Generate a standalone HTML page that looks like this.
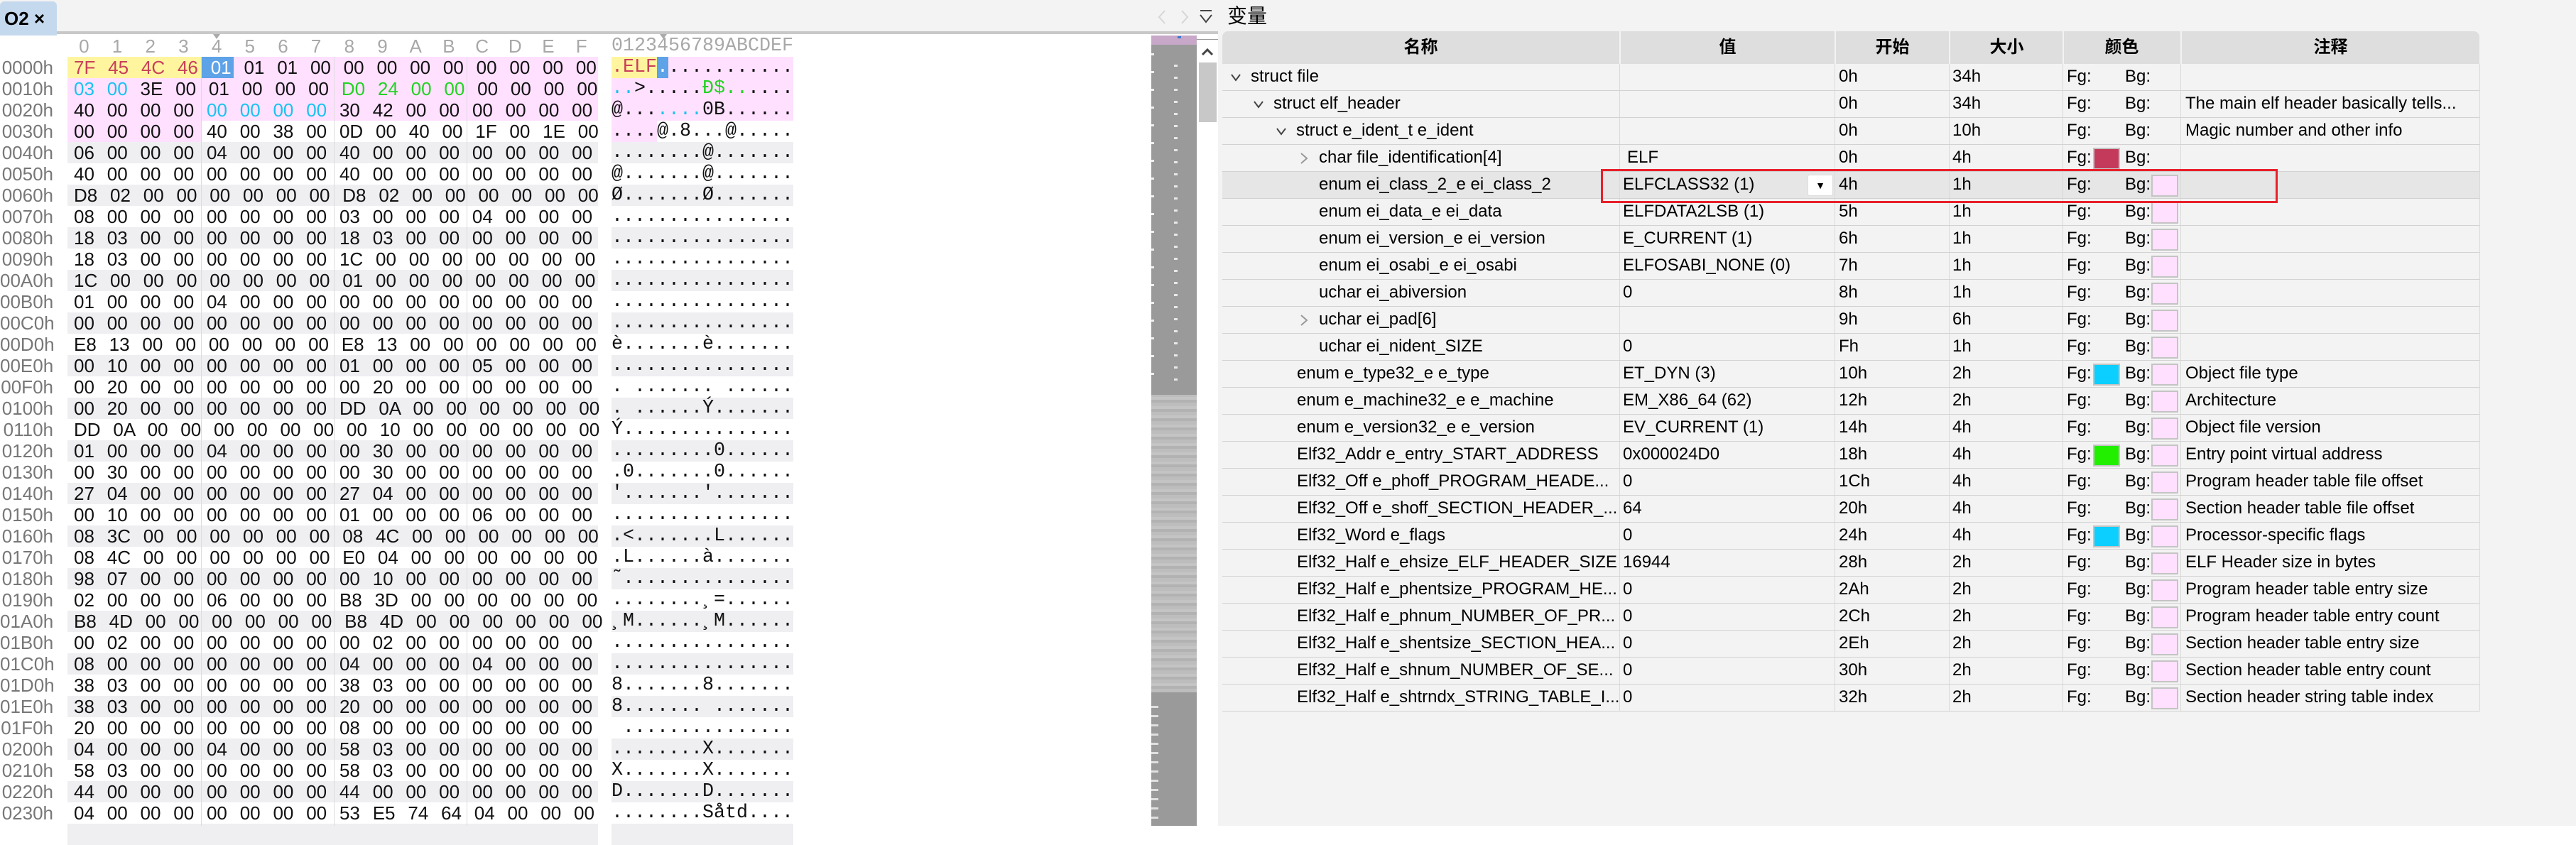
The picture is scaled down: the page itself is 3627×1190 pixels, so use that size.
<!DOCTYPE html>
<html><head><meta charset="utf-8"><style>
*{margin:0;padding:0;box-sizing:border-box}
body{width:3627px;height:1163px;overflow:hidden;background:#fff;position:relative;font-family:"Liberation Sans","Noto Sans CJK SC",sans-serif;color:#000}
.a{position:absolute}
.hr{position:absolute;left:95px;width:780px;height:30px;line-height:30px;font-size:26px;padding-left:9px;word-spacing:10.6px;white-space:pre;color:#111}
.hh{position:absolute;left:95px;top:50px;height:30px;line-height:30px;font-size:26px;color:#a8a8a8;display:flex}
.hh span{width:46.7px;text-align:center}
.off{position:absolute;left:0;width:75px;text-align:right;height:30px;line-height:30px;font-size:26px;color:#777}
.as{position:absolute;left:861px;height:30px;line-height:30px;font-family:"Liberation Mono",monospace;font-size:26.67px;white-space:pre;color:#111}
.g{position:absolute;background:#efeff2;height:30px}
.tr{position:absolute;left:1721px;width:1770px;height:38px;border-bottom:1px solid #d2d2d2;font-size:24px;line-height:36px;white-space:nowrap}
.tr span{position:absolute;top:0}
.fg{left:1189px}.bg{left:1271px}
.sw{position:absolute;top:4px;width:38px;height:31px;border:2px solid #c4c4c4}
</style></head><body>
<div class="a" style="left:0;top:0;width:1715px;height:47px;background:#f3f3f3"></div>
<div class="a" style="left:80px;top:44px;width:1635px;height:4px;background:#c8c8c8"></div>
<div class="a" style="left:0;top:2px;width:80px;height:48px;background:#c5d9ee;border-radius:6px 6px 0 0;font-size:26px;line-height:48px;padding-left:6px;font-weight:bold">O2 ×</div>
<div class="hh"><span>0</span><span>1</span><span>2</span><span>3</span><span>4</span><span>5</span><span>6</span><span>7</span><span>8</span><span>9</span><span>A</span><span>B</span><span>C</span><span>D</span><span>E</span><span>F</span></div>
<div class="as" style="top:50px;color:#a8a8a8">0123456789ABCDEF</div>
<div class="a" style="left:300px;top:48px;width:0;height:0;border-left:5px solid transparent;border-right:5px solid transparent;border-top:7px solid #aaa"></div>
<div class="a" style="left:929px;top:48px;width:0;height:0;border-left:5px solid transparent;border-right:5px solid transparent;border-top:7px solid #aaa"></div>
<div class="g" style="top:200px;left:95px;width:747px"></div><div class="g" style="top:200px;left:861px;width:256px"></div>
<div class="g" style="top:260px;left:95px;width:747px"></div><div class="g" style="top:260px;left:861px;width:256px"></div>
<div class="g" style="top:320px;left:95px;width:747px"></div><div class="g" style="top:320px;left:861px;width:256px"></div>
<div class="g" style="top:380px;left:95px;width:747px"></div><div class="g" style="top:380px;left:861px;width:256px"></div>
<div class="g" style="top:440px;left:95px;width:747px"></div><div class="g" style="top:440px;left:861px;width:256px"></div>
<div class="g" style="top:500px;left:95px;width:747px"></div><div class="g" style="top:500px;left:861px;width:256px"></div>
<div class="g" style="top:560px;left:95px;width:747px"></div><div class="g" style="top:560px;left:861px;width:256px"></div>
<div class="g" style="top:620px;left:95px;width:747px"></div><div class="g" style="top:620px;left:861px;width:256px"></div>
<div class="g" style="top:680px;left:95px;width:747px"></div><div class="g" style="top:680px;left:861px;width:256px"></div>
<div class="g" style="top:740px;left:95px;width:747px"></div><div class="g" style="top:740px;left:861px;width:256px"></div>
<div class="g" style="top:800px;left:95px;width:747px"></div><div class="g" style="top:800px;left:861px;width:256px"></div>
<div class="g" style="top:860px;left:95px;width:747px"></div><div class="g" style="top:860px;left:861px;width:256px"></div>
<div class="g" style="top:920px;left:95px;width:747px"></div><div class="g" style="top:920px;left:861px;width:256px"></div>
<div class="g" style="top:980px;left:95px;width:747px"></div><div class="g" style="top:980px;left:861px;width:256px"></div>
<div class="g" style="top:1040px;left:95px;width:747px"></div><div class="g" style="top:1040px;left:861px;width:256px"></div>
<div class="g" style="top:1100px;left:95px;width:747px"></div><div class="g" style="top:1100px;left:861px;width:256px"></div>
<div class="g" style="top:1160px;left:95px;width:747px"></div><div class="g" style="top:1160px;left:861px;width:256px"></div>
<div class="a" style="left:95px;top:80px;width:747px;height:90px;background:#ffe0ff"></div>
<div class="a" style="left:95px;top:170px;width:188px;height:30px;background:#ffe0ff"></div>
<div class="a" style="left:861px;top:80px;width:256px;height:90px;background:#ffe0ff"></div>
<div class="a" style="left:861px;top:170px;width:64px;height:30px;background:#ffe0ff"></div>
<div class="a" style="left:95px;top:80px;width:188px;height:30px;background:#fff59f"></div>
<div class="a" style="left:283px;top:80px;width:46px;height:30px;background:#5ea2e8"></div>
<div class="a" style="left:861px;top:80px;width:64px;height:30px;background:#fff59f"></div>
<div class="a" style="left:925px;top:80px;width:16px;height:30px;background:#5ea2e8"></div>
<div class="a" style="left:283px;top:80px;width:1px;height:1083px;background:#dcdcdc"></div>
<div class="a" style="left:470px;top:80px;width:1px;height:1083px;background:#dcdcdc"></div>
<div class="a" style="left:657px;top:80px;width:1px;height:1083px;background:#dcdcdc"></div>
<div class="off" style="top:80px">0000h</div><div class="off" style="top:110px">0010h</div><div class="off" style="top:140px">0020h</div><div class="off" style="top:170px">0030h</div>
<div class="off" style="top:200px">0040h</div><div class="off" style="top:230px">0050h</div><div class="off" style="top:260px">0060h</div><div class="off" style="top:290px">0070h</div>
<div class="off" style="top:320px">0080h</div><div class="off" style="top:350px">0090h</div><div class="off" style="top:380px">00A0h</div><div class="off" style="top:410px">00B0h</div>
<div class="off" style="top:440px">00C0h</div><div class="off" style="top:470px">00D0h</div><div class="off" style="top:500px">00E0h</div><div class="off" style="top:530px">00F0h</div>
<div class="off" style="top:560px">0100h</div><div class="off" style="top:590px">0110h</div><div class="off" style="top:620px">0120h</div><div class="off" style="top:650px">0130h</div>
<div class="off" style="top:680px">0140h</div><div class="off" style="top:710px">0150h</div><div class="off" style="top:740px">0160h</div><div class="off" style="top:770px">0170h</div>
<div class="off" style="top:800px">0180h</div><div class="off" style="top:830px">0190h</div><div class="off" style="top:860px">01A0h</div><div class="off" style="top:890px">01B0h</div>
<div class="off" style="top:920px">01C0h</div><div class="off" style="top:950px">01D0h</div><div class="off" style="top:980px">01E0h</div><div class="off" style="top:1010px">01F0h</div>
<div class="off" style="top:1040px">0200h</div><div class="off" style="top:1070px">0210h</div><div class="off" style="top:1100px">0220h</div><div class="off" style="top:1130px">0230h</div>
<div class="hr" style="top:80px"><span style="color:#c8405a">7F 45 4C 46</span> <span style="color:#fff">01</span> 01 01 00 00 00 00 00 00 00 00 00</div>
<div class="hr" style="top:110px"><span style="color:#19c3f0">03 00</span> 3E 00 01 00 00 00 <span style="color:#22d322">D0 24 00 00</span> 00 00 00 00</div>
<div class="hr" style="top:140px">40 00 00 00 <span style="color:#19c3f0">00 00 00 00</span> 30 42 00 00 00 00 00 00</div>
<div class="hr" style="top:170px">00 00 00 00 40 00 38 00 0D 00 40 00 1F 00 1E 00</div>
<div class="hr" style="top:200px">06 00 00 00 04 00 00 00 40 00 00 00 00 00 00 00</div>
<div class="hr" style="top:230px">40 00 00 00 00 00 00 00 40 00 00 00 00 00 00 00</div>
<div class="hr" style="top:260px">D8 02 00 00 00 00 00 00 D8 02 00 00 00 00 00 00</div>
<div class="hr" style="top:290px">08 00 00 00 00 00 00 00 03 00 00 00 04 00 00 00</div>
<div class="hr" style="top:320px">18 03 00 00 00 00 00 00 18 03 00 00 00 00 00 00</div>
<div class="hr" style="top:350px">18 03 00 00 00 00 00 00 1C 00 00 00 00 00 00 00</div>
<div class="hr" style="top:380px">1C 00 00 00 00 00 00 00 01 00 00 00 00 00 00 00</div>
<div class="hr" style="top:410px">01 00 00 00 04 00 00 00 00 00 00 00 00 00 00 00</div>
<div class="hr" style="top:440px">00 00 00 00 00 00 00 00 00 00 00 00 00 00 00 00</div>
<div class="hr" style="top:470px">E8 13 00 00 00 00 00 00 E8 13 00 00 00 00 00 00</div>
<div class="hr" style="top:500px">00 10 00 00 00 00 00 00 01 00 00 00 05 00 00 00</div>
<div class="hr" style="top:530px">00 20 00 00 00 00 00 00 00 20 00 00 00 00 00 00</div>
<div class="hr" style="top:560px">00 20 00 00 00 00 00 00 DD 0A 00 00 00 00 00 00</div>
<div class="hr" style="top:590px">DD 0A 00 00 00 00 00 00 00 10 00 00 00 00 00 00</div>
<div class="hr" style="top:620px">01 00 00 00 04 00 00 00 00 30 00 00 00 00 00 00</div>
<div class="hr" style="top:650px">00 30 00 00 00 00 00 00 00 30 00 00 00 00 00 00</div>
<div class="hr" style="top:680px">27 04 00 00 00 00 00 00 27 04 00 00 00 00 00 00</div>
<div class="hr" style="top:710px">00 10 00 00 00 00 00 00 01 00 00 00 06 00 00 00</div>
<div class="hr" style="top:740px">08 3C 00 00 00 00 00 00 08 4C 00 00 00 00 00 00</div>
<div class="hr" style="top:770px">08 4C 00 00 00 00 00 00 E0 04 00 00 00 00 00 00</div>
<div class="hr" style="top:800px">98 07 00 00 00 00 00 00 00 10 00 00 00 00 00 00</div>
<div class="hr" style="top:830px">02 00 00 00 06 00 00 00 B8 3D 00 00 00 00 00 00</div>
<div class="hr" style="top:860px">B8 4D 00 00 00 00 00 00 B8 4D 00 00 00 00 00 00</div>
<div class="hr" style="top:890px">00 02 00 00 00 00 00 00 00 02 00 00 00 00 00 00</div>
<div class="hr" style="top:920px">08 00 00 00 00 00 00 00 04 00 00 00 04 00 00 00</div>
<div class="hr" style="top:950px">38 03 00 00 00 00 00 00 38 03 00 00 00 00 00 00</div>
<div class="hr" style="top:980px">38 03 00 00 00 00 00 00 20 00 00 00 00 00 00 00</div>
<div class="hr" style="top:1010px">20 00 00 00 00 00 00 00 08 00 00 00 00 00 00 00</div>
<div class="hr" style="top:1040px">04 00 00 00 04 00 00 00 58 03 00 00 00 00 00 00</div>
<div class="hr" style="top:1070px">58 03 00 00 00 00 00 00 58 03 00 00 00 00 00 00</div>
<div class="hr" style="top:1100px">44 00 00 00 00 00 00 00 44 00 00 00 00 00 00 00</div>
<div class="hr" style="top:1130px">04 00 00 00 00 00 00 00 53 E5 74 64 04 00 00 00</div>
<div class="as" style="top:80px"><span style="color:#c8405a">.ELF</span><span style="color:#fff">.</span>...........</div>
<div class="as" style="top:110px"><span style="color:#19c3f0">..</span>&gt;.....<span style="color:#22d322">Ð$..</span>....</div>
<div class="as" style="top:140px">@...<span style="color:#19c3f0">....</span>0B......</div>
<div class="as" style="top:170px">....@.8...@.....</div>
<div class="as" style="top:200px">........@.......</div>
<div class="as" style="top:230px">@.......@.......</div>
<div class="as" style="top:260px">Ø.......Ø.......</div>
<div class="as" style="top:290px">................</div>
<div class="as" style="top:320px">................</div>
<div class="as" style="top:350px">................</div>
<div class="as" style="top:380px">................</div>
<div class="as" style="top:410px">................</div>
<div class="as" style="top:440px">................</div>
<div class="as" style="top:470px">è.......è.......</div>
<div class="as" style="top:500px">................</div>
<div class="as" style="top:530px">. ....... ......</div>
<div class="as" style="top:560px">. ......Ý.......</div>
<div class="as" style="top:590px">Ý...............</div>
<div class="as" style="top:620px">.........0......</div>
<div class="as" style="top:650px">.0.......0......</div>
<div class="as" style="top:680px">'.......'.......</div>
<div class="as" style="top:710px">................</div>
<div class="as" style="top:740px">.&lt;.......L......</div>
<div class="as" style="top:770px">.L......à.......</div>
<div class="as" style="top:800px">˜...............</div>
<div class="as" style="top:830px">........¸=......</div>
<div class="as" style="top:860px">¸M......¸M......</div>
<div class="as" style="top:890px">................</div>
<div class="as" style="top:920px">................</div>
<div class="as" style="top:950px">8.......8.......</div>
<div class="as" style="top:980px">8....... .......</div>
<div class="as" style="top:1010px"> ...............</div>
<div class="as" style="top:1040px">........X.......</div>
<div class="as" style="top:1070px">X.......X.......</div>
<div class="as" style="top:1100px">D.......D.......</div>
<div class="as" style="top:1130px">........Såtd....</div>
<div class="a" style="left:1621px;top:50px;width:64px;height:1113px;background:#9a9a9a"></div>
<div class="a" style="left:1621px;top:50px;width:64px;height:13px;background:#c8a8c8"></div>
<div class="a" style="left:1658px;top:51px;width:5px;height:3px;background:#3a78d0"></div>
<div class="a" style="left:1621px;top:556px;width:64px;height:419px;background:repeating-linear-gradient(0deg,#bdbdbd 0 5px,#b2b2b2 5px 9px,#c4c4c4 9px 13px)"></div>
<div class="a" style="left:1653px;top:90px;width:5px;height:460px;background:repeating-linear-gradient(0deg,transparent 0 14px,#e8e8e8 14px 17px)"></div>
<div class="a" style="left:1621px;top:70px;width:4px;height:480px;background:repeating-linear-gradient(0deg,transparent 0 22px,#eee 22px 25px)"></div>
<div class="a" style="left:1621px;top:990px;width:10px;height:173px;background:repeating-linear-gradient(0deg,transparent 0 10px,#e0e0e0 10px 13px)"></div>
<div class="a" style="left:1685px;top:50px;width:30px;height:1113px;background:#fff"></div>
<div class="a" style="left:1685px;top:55px;width:30px;height:1px;background:#999"></div>
<svg class="a" style="left:1690px;top:66px" width="20" height="14"><polyline points="3,11 10,4 17,11" fill="none" stroke="#444" stroke-width="3"/></svg>
<div class="a" style="left:1688px;top:88px;width:25px;height:84px;background:#c8c8c8"></div>
<div class="a" style="left:1715px;top:0;width:1912px;height:1163px;background:#f3f3f3"></div>
<svg class="a" style="left:1626px;top:12px" width="90" height="24"><polyline points="14,3 6,12 14,21" fill="none" stroke="#d6d6d6" stroke-width="2"/><polyline points="38,3 46,12 38,21" fill="none" stroke="#d6d6d6" stroke-width="2"/><line x1="64" y1="3" x2="80" y2="3" stroke="#444" stroke-width="2"/><polyline points="64,9 72,19 80,9" fill="none" stroke="#444" stroke-width="2"/></svg>
<div class="a" style="left:1728px;top:6px;font-size:28px;line-height:34px">变量</div>
<div class="a" style="left:1721px;top:44px;width:1770px;height:46px;background:#dedede;border-radius:8px 8px 0 0;font-size:24px;font-weight:bold;line-height:46px">
<span class="a" style="left:0;width:559px;text-align:center">名称</span>
<span class="a" style="left:561px;width:301px;text-align:center">值</span>
<span class="a" style="left:864px;width:159px;text-align:center">开始</span>
<span class="a" style="left:1025px;width:159px;text-align:center">大小</span>
<span class="a" style="left:1185px;width:163px;text-align:center">颜色</span>
<span class="a" style="left:1351px;width:419px;text-align:center">注释</span>
</div>
<div class="a" style="left:2280px;top:44px;width:2px;height:46px;background:#f3f3f3"></div>
<div class="a" style="left:2583px;top:44px;width:2px;height:46px;background:#f3f3f3"></div>
<div class="a" style="left:2744px;top:44px;width:2px;height:46px;background:#f3f3f3"></div>
<div class="a" style="left:2904px;top:44px;width:2px;height:46px;background:#f3f3f3"></div>
<div class="a" style="left:3070px;top:44px;width:2px;height:46px;background:#f3f3f3"></div>
<div class="a" style="left:1721px;top:242px;width:1770px;height:38px;background:#e6e6e6"></div>
<div class="a" style="left:2280px;top:90px;width:1px;height:912px;background:#dadada"></div>
<div class="a" style="left:2583px;top:90px;width:1px;height:912px;background:#dadada"></div>
<div class="a" style="left:2744px;top:90px;width:1px;height:912px;background:#dadada"></div>
<div class="a" style="left:2904px;top:90px;width:1px;height:912px;background:#dadada"></div>
<div class="a" style="left:3070px;top:90px;width:1px;height:912px;background:#dadada"></div>
<div class="a" style="left:3491px;top:90px;width:1px;height:912px;background:#dadada"></div>
<div class="tr" style="top:90px"><svg class="a" style="left:11px;top:12px" width="16" height="14"><polyline points="2,3 8,11 14,3" fill="none" stroke="#444" stroke-width="2"/></svg><span style="left:40px">struct file</span><span style="left:868px">0h</span><span style="left:1028px">34h</span><span class="fg">Fg:</span><span class="bg">Bg:</span></div>
<div class="tr" style="top:128px"><svg class="a" style="left:43px;top:12px" width="16" height="14"><polyline points="2,3 8,11 14,3" fill="none" stroke="#444" stroke-width="2"/></svg><span style="left:72px">struct elf_header</span><span style="left:868px">0h</span><span style="left:1028px">34h</span><span class="fg">Fg:</span><span class="bg">Bg:</span><span style="left:1356px">The main elf header basically tells...</span></div>
<div class="tr" style="top:166px"><svg class="a" style="left:75px;top:12px" width="16" height="14"><polyline points="2,3 8,11 14,3" fill="none" stroke="#444" stroke-width="2"/></svg><span style="left:104px">struct e_ident_t e_ident</span><span style="left:868px">0h</span><span style="left:1028px">10h</span><span class="fg">Fg:</span><span class="bg">Bg:</span><span style="left:1356px">Magic number and other info</span></div>
<div class="tr" style="top:204px"><svg class="a" style="left:108px;top:10px" width="14" height="18"><polyline points="3,2 11,9 3,16" fill="none" stroke="#999" stroke-width="2"/></svg><span style="left:136px">char file_identification[4]</span><span style="left:570px">ELF</span><span style="left:868px">0h</span><span style="left:1028px">4h</span><span class="fg">Fg:</span><div class="sw" style="left:1226px;background:#c43a5a"></div><span class="bg">Bg:</span></div>
<div class="tr" style="top:242px"><span style="left:136px">enum ei_class_2_e ei_class_2</span><span style="left:564px">ELFCLASS32 (1)</span><div class="a" style="left:824px;top:4px;width:36px;height:30px;background:#fff;border:1px solid #ddd;border-radius:3px;font-size:14px;line-height:28px;text-align:center">▼</div><span style="left:868px">4h</span><span style="left:1028px">1h</span><span class="fg">Fg:</span><span class="bg">Bg:</span><div class="sw" style="left:1308px;background:#ffe0ff"></div></div>
<div class="tr" style="top:280px"><span style="left:136px">enum ei_data_e ei_data</span><span style="left:564px">ELFDATA2LSB (1)</span><span style="left:868px">5h</span><span style="left:1028px">1h</span><span class="fg">Fg:</span><span class="bg">Bg:</span><div class="sw" style="left:1308px;background:#ffe0ff"></div></div>
<div class="tr" style="top:318px"><span style="left:136px">enum ei_version_e ei_version</span><span style="left:564px">E_CURRENT (1)</span><span style="left:868px">6h</span><span style="left:1028px">1h</span><span class="fg">Fg:</span><span class="bg">Bg:</span><div class="sw" style="left:1308px;background:#ffe0ff"></div></div>
<div class="tr" style="top:356px"><span style="left:136px">enum ei_osabi_e ei_osabi</span><span style="left:564px">ELFOSABI_NONE (0)</span><span style="left:868px">7h</span><span style="left:1028px">1h</span><span class="fg">Fg:</span><span class="bg">Bg:</span><div class="sw" style="left:1308px;background:#ffe0ff"></div></div>
<div class="tr" style="top:394px"><span style="left:136px">uchar ei_abiversion</span><span style="left:564px">0</span><span style="left:868px">8h</span><span style="left:1028px">1h</span><span class="fg">Fg:</span><span class="bg">Bg:</span><div class="sw" style="left:1308px;background:#ffe0ff"></div></div>
<div class="tr" style="top:432px"><svg class="a" style="left:108px;top:10px" width="14" height="18"><polyline points="3,2 11,9 3,16" fill="none" stroke="#999" stroke-width="2"/></svg><span style="left:136px">uchar ei_pad[6]</span><span style="left:868px">9h</span><span style="left:1028px">6h</span><span class="fg">Fg:</span><span class="bg">Bg:</span><div class="sw" style="left:1308px;background:#ffe0ff"></div></div>
<div class="tr" style="top:470px"><span style="left:136px">uchar ei_nident_SIZE</span><span style="left:564px">0</span><span style="left:868px">Fh</span><span style="left:1028px">1h</span><span class="fg">Fg:</span><span class="bg">Bg:</span><div class="sw" style="left:1308px;background:#ffe0ff"></div></div>
<div class="tr" style="top:508px"><span style="left:105px">enum e_type32_e e_type</span><span style="left:564px">ET_DYN (3)</span><span style="left:868px">10h</span><span style="left:1028px">2h</span><span class="fg">Fg:</span><div class="sw" style="left:1226px;background:#0ccfff"></div><span class="bg">Bg:</span><div class="sw" style="left:1308px;background:#ffe0ff"></div><span style="left:1356px">Object file type</span></div>
<div class="tr" style="top:546px"><span style="left:105px">enum e_machine32_e e_machine</span><span style="left:564px">EM_X86_64 (62)</span><span style="left:868px">12h</span><span style="left:1028px">2h</span><span class="fg">Fg:</span><span class="bg">Bg:</span><div class="sw" style="left:1308px;background:#ffe0ff"></div><span style="left:1356px">Architecture</span></div>
<div class="tr" style="top:584px"><span style="left:105px">enum e_version32_e e_version</span><span style="left:564px">EV_CURRENT (1)</span><span style="left:868px">14h</span><span style="left:1028px">4h</span><span class="fg">Fg:</span><span class="bg">Bg:</span><div class="sw" style="left:1308px;background:#ffe0ff"></div><span style="left:1356px">Object file version</span></div>
<div class="tr" style="top:622px"><span style="left:105px">Elf32_Addr e_entry_START_ADDRESS</span><span style="left:564px">0x000024D0</span><span style="left:868px">18h</span><span style="left:1028px">4h</span><span class="fg">Fg:</span><div class="sw" style="left:1226px;background:#22ee00"></div><span class="bg">Bg:</span><div class="sw" style="left:1308px;background:#ffe0ff"></div><span style="left:1356px">Entry point virtual address</span></div>
<div class="tr" style="top:660px"><span style="left:105px">Elf32_Off e_phoff_PROGRAM_HEADE...</span><span style="left:564px">0</span><span style="left:868px">1Ch</span><span style="left:1028px">4h</span><span class="fg">Fg:</span><span class="bg">Bg:</span><div class="sw" style="left:1308px;background:#ffe0ff"></div><span style="left:1356px">Program header table file offset</span></div>
<div class="tr" style="top:698px"><span style="left:105px">Elf32_Off e_shoff_SECTION_HEADER_...</span><span style="left:564px">64</span><span style="left:868px">20h</span><span style="left:1028px">4h</span><span class="fg">Fg:</span><span class="bg">Bg:</span><div class="sw" style="left:1308px;background:#ffe0ff"></div><span style="left:1356px">Section header table file offset</span></div>
<div class="tr" style="top:736px"><span style="left:105px">Elf32_Word e_flags</span><span style="left:564px">0</span><span style="left:868px">24h</span><span style="left:1028px">4h</span><span class="fg">Fg:</span><div class="sw" style="left:1226px;background:#0ccfff"></div><span class="bg">Bg:</span><div class="sw" style="left:1308px;background:#ffe0ff"></div><span style="left:1356px">Processor-specific flags</span></div>
<div class="tr" style="top:774px"><span style="left:105px">Elf32_Half e_ehsize_ELF_HEADER_SIZE</span><span style="left:564px">16944</span><span style="left:868px">28h</span><span style="left:1028px">2h</span><span class="fg">Fg:</span><span class="bg">Bg:</span><div class="sw" style="left:1308px;background:#ffe0ff"></div><span style="left:1356px">ELF Header size in bytes</span></div>
<div class="tr" style="top:812px"><span style="left:105px">Elf32_Half e_phentsize_PROGRAM_HE...</span><span style="left:564px">0</span><span style="left:868px">2Ah</span><span style="left:1028px">2h</span><span class="fg">Fg:</span><span class="bg">Bg:</span><div class="sw" style="left:1308px;background:#ffe0ff"></div><span style="left:1356px">Program header table entry size</span></div>
<div class="tr" style="top:850px"><span style="left:105px">Elf32_Half e_phnum_NUMBER_OF_PR...</span><span style="left:564px">0</span><span style="left:868px">2Ch</span><span style="left:1028px">2h</span><span class="fg">Fg:</span><span class="bg">Bg:</span><div class="sw" style="left:1308px;background:#ffe0ff"></div><span style="left:1356px">Program header table entry count</span></div>
<div class="tr" style="top:888px"><span style="left:105px">Elf32_Half e_shentsize_SECTION_HEA...</span><span style="left:564px">0</span><span style="left:868px">2Eh</span><span style="left:1028px">2h</span><span class="fg">Fg:</span><span class="bg">Bg:</span><div class="sw" style="left:1308px;background:#ffe0ff"></div><span style="left:1356px">Section header table entry size</span></div>
<div class="tr" style="top:926px"><span style="left:105px">Elf32_Half e_shnum_NUMBER_OF_SE...</span><span style="left:564px">0</span><span style="left:868px">30h</span><span style="left:1028px">2h</span><span class="fg">Fg:</span><span class="bg">Bg:</span><div class="sw" style="left:1308px;background:#ffe0ff"></div><span style="left:1356px">Section header table entry count</span></div>
<div class="tr" style="top:964px"><span style="left:105px">Elf32_Half e_shtrndx_STRING_TABLE_I...</span><span style="left:564px">0</span><span style="left:868px">32h</span><span style="left:1028px">2h</span><span class="fg">Fg:</span><span class="bg">Bg:</span><div class="sw" style="left:1308px;background:#ffe0ff"></div><span style="left:1356px">Section header string table index</span></div>
<div class="a" style="left:2254px;top:238px;width:953px;height:48px;border:3px solid #e8202a"></div>
</body></html>
